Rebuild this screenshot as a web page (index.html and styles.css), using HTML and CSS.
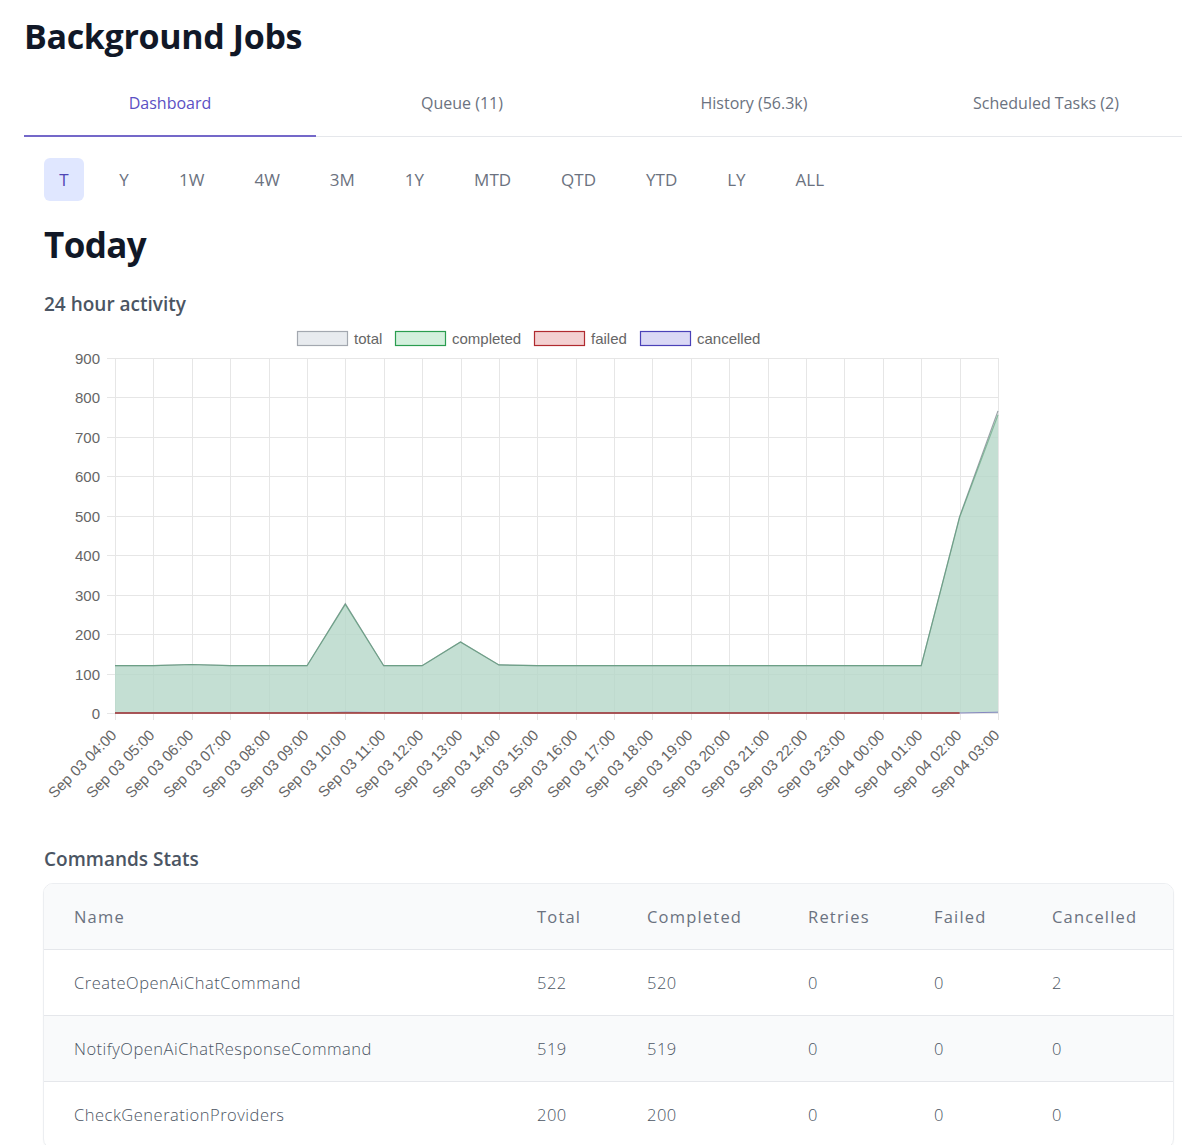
FILE: index.html
```html
<!DOCTYPE html>
<html>
<head>
<meta charset="utf-8">
<link rel="stylesheet" href="styles.css">
</head>
<body>
<div class="page">
  <h1 class="title">Background Jobs</h1>
  <nav class="tabs">
    <div class="tab active">Dashboard</div>
    <div class="tab">Queue (11)</div>
    <div class="tab">History (56.3k)</div>
    <div class="tab">Scheduled Tasks (2)</div>
  </nav>
  <section class="content">
    <div class="periods">
      <button class="period active">T</button>
      <button class="period">Y</button>
      <button class="period">1W</button>
      <button class="period">4W</button>
      <button class="period">3M</button>
      <button class="period">1Y</button>
      <button class="period">MTD</button>
      <button class="period">QTD</button>
      <button class="period">YTD</button>
      <button class="period">LY</button>
      <button class="period">ALL</button>
    </div>
    <h2 class="heading">Today</h2>
    <h3 class="subheading">24 hour activity</h3>
    <div class="chart-wrap">
      <svg id="chart" class="chart" width="1000" height="490" viewBox="24 322 1000 490" xmlns="http://www.w3.org/2000/svg"></svg>
    </div>
    <h3 class="subheading stats-title">Commands Stats</h3>
    <div class="table-card">
      <table class="stats">
        <colgroup>
          <col class="c-name"><col class="c-total"><col class="c-completed"><col class="c-retries"><col class="c-failed"><col class="c-cancelled">
        </colgroup>
        <thead>
          <tr><th>Name</th><th>Total</th><th>Completed</th><th>Retries</th><th>Failed</th><th>Cancelled</th></tr>
        </thead>
        <tbody>
          <tr><td>CreateOpenAiChatCommand</td><td>522</td><td>520</td><td>0</td><td>0</td><td>2</td></tr>
          <tr><td>NotifyOpenAiChatResponseCommand</td><td>519</td><td>519</td><td>0</td><td>0</td><td>0</td></tr>
          <tr><td>CheckGenerationProviders</td><td>200</td><td>200</td><td>0</td><td>0</td><td>0</td></tr>
        </tbody>
      </table>
    </div>
  </section>
</div>
<script src="chart.js"></script>
</body>
</html>
```
FILE: styles.css
```css
html, body { margin: 0; padding: 0; background: #fff; }
body { font-family: "Open Sans", "Noto Sans", sans-serif; color: #111827; overflow-x: hidden; }
.page { padding: 14px 0 0 24px; }
.title { margin: 0; font-size: 34px; line-height: 44px; font-weight: 700; letter-spacing: -0.35px; color: #111827; }
.tabs { display: flex; margin-top: 22px; border-bottom: 1px solid #e5e7eb; }
.tab { flex: 0 0 292px; text-align: center; font-size: 16px; line-height: 24px; padding: 11px 0 20px; color: #6b7280; border-bottom: 2px solid transparent; margin-bottom: -1px; }
.tab.active { color: #5b50c4; border-bottom-color: #7468c9; }
.content { padding-left: 20px; }
.periods { display: flex; gap: 20px; margin-top: 21px; }
.period { border: 0; background: transparent; font-family: "Open Sans", sans-serif; font-size: 17px; color: #6b7280; height: 43px; padding: 0 15px; border-radius: 6px; min-width: 40px; }
.period.active { background: #e0e7ff; color: #4f46b5; }
.heading { margin: 22px 0 0; font-size: 35px; line-height: 44px; font-weight: 700; color: #111827; letter-spacing: -0.6px; }
.subheading { margin: 24px 0 0; font-size: 19px; line-height: 26px; font-weight: 600; color: #4b5563; }
.chart-wrap { margin: 5px 0 0 -20px; height: 490px; }
.chart { display: block; }
.chart text { font-family: "Liberation Sans", Arial, sans-serif; font-size: 15px; fill: #666; }
.stats-title { margin-top: 34px; }
.table-card { margin: 11px 0 0 -1px; width: 1129px; border: 1px solid #eceef1; border-radius: 10px; overflow: hidden; box-shadow: 0 1px 2px rgba(0,0,0,0.03); }
.stats { width: 100%; border-collapse: collapse; table-layout: fixed; }
.c-name { width: 463px; } .c-total { width: 110px; } .c-completed { width: 161px; } .c-retries { width: 126px; } .c-failed { width: 118px; } .c-cancelled { width: 151px; }
.stats th, .stats td { text-align: left; padding: 0 0 0 30px; height: 65px; font-size: 16.5px; font-weight: 400; color: #4b5563; border-bottom: 1px solid #e5e7eb; white-space: nowrap; }
.stats td { font-weight: 300; color: #4b5563; letter-spacing: 0.5px; }
.stats th { background: #f9fafb; letter-spacing: 1.2px; color: #6b7280; font-weight: 400; }
.stats tbody tr:nth-child(even) td { background: #f9fafb; }
```
FILE: chart.js
```js
(function () {
  var svg = document.getElementById('chart');
  var NS = 'http://www.w3.org/2000/svg';
  function el(name, attrs, text) {
    var e = document.createElementNS(NS, name);
    for (var k in attrs) e.setAttribute(k, attrs[k]);
    if (text !== undefined) e.textContent = text;
    svg.appendChild(e);
    return e;
  }
  var x0 = 115, x1 = 998, yTop = 358, yBot = 713;
  var n = 24, step = (x1 - x0) / (n - 1);
  var py = function (v) { return yBot - v * (yBot - yTop) / 900; };
  var px = function (i) { return x0 + i * step; };

  var legend = [
    { x: 297, label: 'total', fill: '#e8ebef', stroke: '#a3a8b0' },
    { x: 395, label: 'completed', fill: '#d3f0dd', stroke: '#2a9d4f' },
    { x: 534, label: 'failed', fill: '#f3d0d1', stroke: '#b02a2f' },
    { x: 640, label: 'cancelled', fill: '#dad8f5', stroke: '#4a41b8' }
  ];
  legend.forEach(function (l) {
    el('rect', { x: l.x + 0.5, y: 331.5, width: 50, height: 14, fill: l.fill, stroke: l.stroke, 'stroke-width': 1.2 });
    el('text', { x: l.x + 57, y: 343.5 }, l.label);
  });

  for (var v = 0; v <= 900; v += 100) {
    var y = Math.round(py(v)) + 0.5;
    el('line', { x1: 107, y1: y, x2: x1, y2: y, stroke: '#e6e6e6', 'stroke-width': 1 });
    el('text', { x: 100, y: y + 5, 'text-anchor': 'end' }, String(v));
  }
  var labels = [];
  for (var i = 0; i < n; i++) {
    var h = (4 + i) % 24;
    var d = (4 + i) >= 24 ? '04' : '03';
    labels.push('Sep ' + d + ' ' + (h < 10 ? '0' + h : h) + ':00');
  }
  for (var j = 0; j < n; j++) {
    var x = Math.round(px(j)) + 0.5;
    el('line', { x1: x, y1: yTop, x2: x, y2: 720, stroke: '#e6e6e6', 'stroke-width': 1 });
    el('text', { x: x + 2, y: 736, 'text-anchor': 'end', transform: 'rotate(-45 ' + (x + 2) + ' 736)' }, labels[j]);
  }

  var total = [120,120,123,120,120,120,277,120,120,180,122,120,120,120,120,120,120,120,120,120,120,120,498,766];
  var completed = [120,120,123,120,120,120,275,120,120,180,122,120,120,120,120,120,120,120,120,120,120,120,496,756];
  function pts(arr) { return arr.map(function (v, i) { return px(i).toFixed(1) + ',' + py(v).toFixed(1); }); }
  var tp = pts(total);
  el('polygon', { points: tp.join(' ') + ' ' + px(n - 1) + ',' + yBot + ' ' + x0 + ',' + yBot, fill: 'rgba(226,230,234,0.55)' });
  var cp = pts(completed);
  el('polygon', { points: cp.join(' ') + ' ' + px(n - 1) + ',' + yBot + ' ' + x0 + ',' + yBot, fill: 'rgba(160,208,184,0.55)' });
  el('polyline', { points: tp.join(' '), fill: 'none', stroke: '#9aa3a8', 'stroke-width': 1.2 });
  el('polyline', { points: cp.join(' '), fill: 'none', stroke: '#4f9c70', 'stroke-width': 1.2, 'stroke-opacity': 0.6 });
  var canc = [0,0,0,0,0,0,2,1,0,0,0,0,0,0,0,0,0,0,0,0,0,0,0,2];
  el('polyline', { points: pts(canc).join(' '), fill: 'none', stroke: '#6b62b8', 'stroke-width': 1, 'stroke-opacity': 0.7 });
  el('line', { x1: x0, y1: yBot, x2: px(n - 2), y2: yBot, stroke: '#a3342e', 'stroke-width': 1.4 });
})();
```
